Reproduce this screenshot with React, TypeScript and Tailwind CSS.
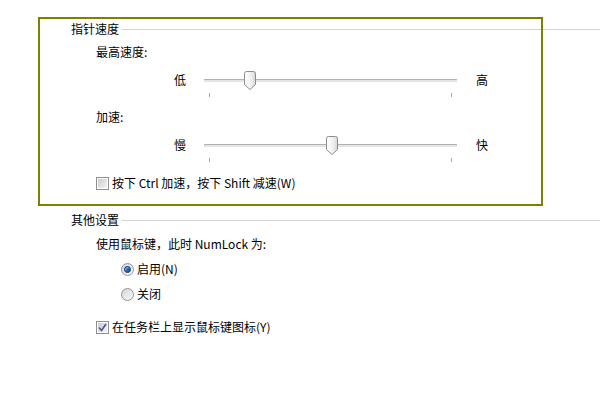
import React from 'react';

const Thumb: React.FC<{ left: number }> = ({ left }) => (
  <svg
    className="absolute top-[3px]"
    style={{ left }}
    width="12"
    height="19"
    viewBox="0 0 12 19"
  >
    <defs>
      <linearGradient id="thumbFill" x1="0" y1="0" x2="1" y2="0">
        <stop offset="0" stopColor="#ffffff" />
        <stop offset="0.6" stopColor="#f0f0f0" />
        <stop offset="1" stopColor="#d6d6d6" />
      </linearGradient>
    </defs>
    <path
      d="M0.5 2.5 Q0.5 0.5 2.5 0.5 H9.5 Q11.5 0.5 11.5 2.5 V13.5 L6 18.5 L0.5 13.5 Z"
      fill="url(#thumbFill)"
      stroke="#8c8c8c"
    />
  </svg>
);

const Slider: React.FC<{ low: string; high: string; thumb: number }> = ({ low, high, thumb }) => (
  <div className="flex items-start pl-[174px]">
    <span className="h-[24px] leading-[24px] w-[30px]">{low}</span>
    <div className="flex flex-col w-[253px]">
      <div className="relative h-[24px] flex items-center">
        <div className="w-full h-[3px] border-t border-[#b2b2b2] bg-[#e4e4e4]" />
        <Thumb left={thumb} />
      </div>
      <div className="mt-[1px] h-[4px] flex justify-between px-[5px]">
        <div className="w-px h-full bg-[#a8a8a8]" />
        <div className="w-px h-full bg-[#a8a8a8]" />
      </div>
    </div>
    <span className="h-[24px] leading-[24px] ml-[19px]">{high}</span>
  </div>
);

const Checkbox: React.FC<{ checked?: boolean }> = ({ checked }) => (
  <div className="w-[13px] h-[13px] border border-[#8e8f8f] bg-white p-[1px] shrink-0">
    <div className="w-full h-full bg-gradient-to-br from-[#cbcbcb] to-[#f4f4f4] flex items-center justify-center">
      {checked && (
        <svg width="9" height="9" viewBox="0 0 9 9">
          <path d="M1 4.5 L3.5 7.5 L8 1" fill="none" stroke="#3f57a0" strokeWidth="1.6" />
        </svg>
      )}
    </div>
  </div>
);

const Radio: React.FC<{ selected?: boolean }> = ({ selected }) => (
  <div className="w-[13px] h-[13px] rounded-full border border-[#929292] bg-gradient-to-br from-[#d4d4d4] to-[#fbfbfb] flex items-center justify-center shrink-0">
    {selected && (
      <div className="w-[7px] h-[7px] rounded-full bg-[#1d5fa3] border border-[#17406c] shadow-[inset_1px_1px_1px_#7fb6ea]" />
    )}
  </div>
);

const GroupHeader: React.FC<{ title: string }> = ({ title }) => (
  <div className="h-[18px] flex items-center pl-[71px]">
    <span>{title}</span>
    <div className="flex-1 h-px bg-[#d3d3d3] ml-[3px]" />
  </div>
);

const App: React.FC = () => {
  return (
    <div
      className="relative w-[600px] h-[400px] bg-white text-black text-[12px] overflow-hidden pt-[20px]"
      style={{ fontFamily: '"Noto Sans CJK SC", "Noto Sans", sans-serif' }}
    >
      <GroupHeader title="指针速度" />
      <div className="h-[18px] leading-[18px] mt-[5px] pl-[96px]">最高速度:</div>
      <div className="mt-[7px]">
        <Slider low="低" high="高" thumb={40} />
      </div>
      <div className="h-[18px] leading-[18px] mt-[11px] pl-[96px]">加速:</div>
      <div className="mt-[7px]">
        <Slider low="慢" high="快" thumb={122} />
      </div>
      <div className="h-[18px] mt-[12px] pl-[96px] flex items-center gap-[3px]">
        <Checkbox />
        <span>按下 Ctrl 加速，按下 Shift 减速(W)</span>
      </div>

      <div className="mt-[19px]">
        <GroupHeader title="其他设置" />
      </div>
      <div className="h-[18px] leading-[18px] mt-[6px] pl-[96px]">使用鼠标键，此时 NumLock 为:</div>
      <div className="h-[18px] mt-[7px] pl-[121px] flex items-center gap-[3px]">
        <Radio selected />
        <span>启用(N)</span>
      </div>
      <div className="h-[18px] mt-[7px] pl-[121px] flex items-center gap-[3px]">
        <Radio />
        <span>关闭</span>
      </div>
      <div className="h-[18px] mt-[15px] pl-[96px] flex items-center gap-[3px]">
        <Checkbox checked />
        <span>在任务栏上显示鼠标键图标(Y)</span>
      </div>

      {/* highlight frame drawn over the pointer speed group */}
      <div className="absolute left-[38px] top-[17px] w-[505px] h-[189px] border-2 border-[#808000] pointer-events-none" />
    </div>
  );
};

export default App;
